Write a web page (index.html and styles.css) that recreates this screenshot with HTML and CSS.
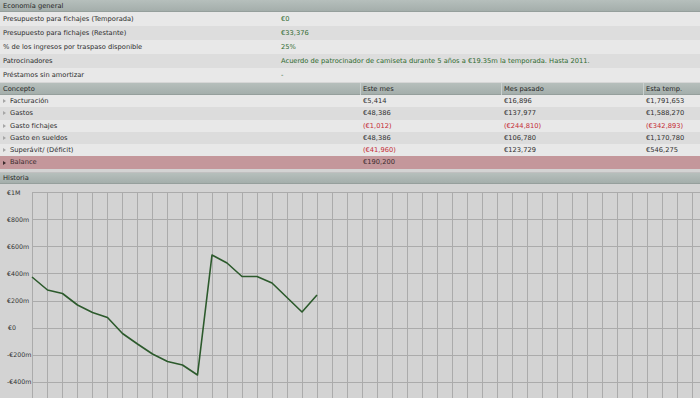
FILE: index.html
```html
<!DOCTYPE html>
<html lang="es">

<head>
    <meta charset="UTF-8" />
    <title>Economía general</title>
    <link rel="stylesheet" href="styles.css">
</head>

<body>
    <div class="panel">
        <div class="panel-head">Economía general</div>
        <div class="info-row">
            <span class="label">Presupuesto para fichajes (Temporada)</span>
            <span class="value">€0</span>
        </div>
        <div class="info-row alt">
            <span class="label">Presupuesto para fichajes (Restante)</span>
            <span class="value">€33,376</span>
        </div>
        <div class="info-row">
            <span class="label">% de los ingresos por traspaso disponible</span>
            <span class="value">25%</span>
        </div>
        <div class="info-row alt">
            <span class="label">Patrocinadores</span>
            <span class="value">Acuerdo de patrocinador de camiseta durante 5 años a €19.35m la temporada. Hasta 2011.</span>
        </div>
        <div class="info-row">
            <span class="label">Préstamos sin amortizar</span>
            <span class="value">-</span>
        </div>
    </div>

    <div class="panel money">
        <div class="money-row money-head">
            <span>Concepto</span>
            <span class="col">Este mes</span>
            <span class="col">Mes pasado</span>
            <span class="col">Esta temp.</span>
        </div>
        <div class="money-row">
            <span class="name"><i class="arrow"></i>Facturación</span>
            <span class="col">€5,414</span>
            <span class="col">€16,896</span>
            <span class="col">€1,791,653</span>
        </div>
        <div class="money-row alt">
            <span class="name"><i class="arrow"></i>Gastos</span>
            <span class="col">€48,386</span>
            <span class="col">€137,977</span>
            <span class="col">€1,588,270</span>
        </div>
        <div class="money-row">
            <span class="name"><i class="arrow"></i>Gasto fichajes</span>
            <span class="col neg">(€1,012)</span>
            <span class="col neg">(€244,810)</span>
            <span class="col neg">(€342,893)</span>
        </div>
        <div class="money-row alt">
            <span class="name"><i class="arrow"></i>Gasto en sueldos</span>
            <span class="col">€48,386</span>
            <span class="col">€106,780</span>
            <span class="col">€1,170,780</span>
        </div>
        <div class="money-row">
            <span class="name"><i class="arrow"></i>Superávit/ (Déficit)</span>
            <span class="col neg">(€41,960)</span>
            <span class="col">€123,729</span>
            <span class="col">€546,275</span>
        </div>
        <div class="money-row balance">
            <span class="name"><i class="arrow dark"></i>Balance</span>
            <span class="col">€190,200</span>
            <span class="col"></span>
            <span class="col"></span>
        </div>
    </div>

    <div class="panel history">
        <div class="panel-head">Historia</div>
        <svg class="chart" width="700" height="215" viewBox="0 0 700 215">
            <g class="grid" id="grid"></g>
            <g class="ticks">
                <text x="7" y="10.5">€1M</text>
                <text x="7" y="37.5">€800m</text>
                <text x="7" y="64.5">€600m</text>
                <text x="7" y="91.5">€400m</text>
                <text x="7" y="118.5">€200m</text>
                <text x="8" y="145.5">€0</text>
                <text x="7" y="172.5">-€200m</text>
                <text x="7" y="199.5">-€400m</text>
            </g>
            <polyline class="line"
                points="32,93 47.5,106 62.5,109.5 77.5,121 92.5,128.5 107.5,133.5 122.5,149.5 137.5,160 152.5,170 167.5,177.5 182.5,181 197.5,191 212,71 227,79 242,92.5 257,92.5 272,99 287,113.5 302,128 317,111" />
        </svg>
    </div>

    <script>
        // grid lines for the history chart
        const grid = document.getElementById('grid');
        let lines = '';
        for (let i = 0; i < 8; i++) {
            const y = Math.round(8 + i * 27.14) + 0.5;
            lines += '<line x1="32" y1="' + y + '" x2="700" y2="' + y + '" />';
        }
        for (let x = 32.5; x < 700; x += 15) {
            lines += '<line x1="' + x + '" y1="8" x2="' + x + '" y2="215" />';
        }
        grid.innerHTML = lines;
    </script>
</body>

</html>
```

FILE: styles.css
```css
body {
    margin: 0;
    width: 700px;
    height: 398px;
    overflow: hidden;
    background: #d3d3d3;
    font-family: 'DejaVu Sans', sans-serif;
    font-size: 6.7px;
    color: #2e2e2e;
}

.panel {
    display: flex;
    flex-direction: column;
}

.panel-head {
    height: 12px;
    line-height: 12px;
    padding-left: 3px;
    background: linear-gradient(#b6bfbc, #a4aeab);
    border-bottom: 1px solid #959f9c;
    box-sizing: border-box;
    color: #262626;
}

.info-row {
    display: grid;
    grid-template-columns: 281px 1fr;
    height: 14px;
    line-height: 14px;
    background: #e8e8e8;
    white-space: nowrap;
}

.info-row.alt {
    background: #dddddd;
}

.info-row .label {
    padding-left: 3px;
}

.info-row .value {
    color: #2f6a2f;
}

.money {
    border-top: 1px solid #d6d6d6;
}

.money-row {
    display: grid;
    grid-template-columns: 360px 141px 142px 1fr;
    height: 12.3px;
    line-height: 12.3px;
    background: #e8e8e8;
    white-space: nowrap;
}

.money-row.alt {
    background: #dcdcdc;
}

.money-row .col {
    padding-left: 3px;
}

.money-head {
    height: 12px;
    line-height: 12px;
    background: linear-gradient(#b6bfbc, #a4aeab);
    border-bottom: 1px solid #959f9c;
    box-sizing: border-box;
    color: #262626;
}

.money-head span:first-child {
    padding-left: 3px;
}

.money-head .col {
    border-left: 1px solid #c9d0ce;
    padding-left: 2px;
}

.name {
    display: flex;
    align-items: center;
}

.arrow {
    width: 0;
    height: 0;
    margin: 0 4px 0 3px;
    border-top: 2.5px solid transparent;
    border-bottom: 2.5px solid transparent;
    border-left: 3px solid #a6a6a6;
}

.arrow.dark {
    border-left-color: #3a2a2c;
}

.neg {
    color: #c42a34;
}

.balance {
    background: #c4979b;
    color: #3b2c2e;
}

.history {
    margin-top: 3px;
    border-top: 1px solid #c0c0c0;
}

.history .panel-head {
    height: 11px;
    line-height: 11px;
}

.chart {
    display: block;
    background: #d3d3d3;
}

.grid line {
    stroke: #ababab;
    stroke-width: 1;
}

.ticks text {
    font-family: 'DejaVu Sans', sans-serif;
    font-size: 6.3px;
    fill: #333;
}

.line {
    fill: none;
    stroke: #2c5a2c;
    stroke-width: 1.6;
    stroke-linejoin: round;
}
```
